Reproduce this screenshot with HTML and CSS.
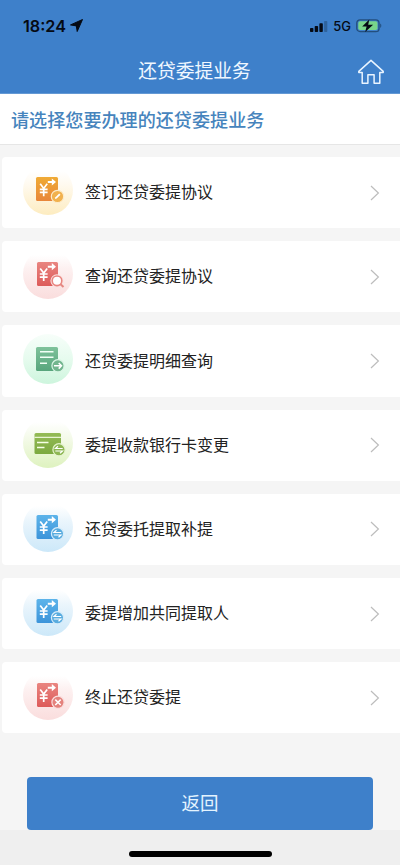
FILE: index.html
```html
<!DOCTYPE html>
<html lang="zh-CN">
<head>
<meta charset="utf-8">
<meta name="viewport" content="width=device-width, initial-scale=1">
<title>还贷委提业务</title>
<link rel="stylesheet" href="styles.css">
</head>
<body>
<svg class="defs" aria-hidden="true">
  <defs>
    <linearGradient id="g-orange" x1="0" y1="0" x2="0" y2="1"><stop offset="0" stop-color="#f0ab35"/><stop offset="1" stop-color="#e8863a"/></linearGradient>
    <linearGradient id="g-red" x1="0" y1="0" x2="0" y2="1"><stop offset="0" stop-color="#e98580"/><stop offset="1" stop-color="#dd5b5a"/></linearGradient>
    <linearGradient id="g-green" x1="0" y1="0" x2="0" y2="1"><stop offset="0" stop-color="#7fc29b"/><stop offset="1" stop-color="#57a57c"/></linearGradient>
    <linearGradient id="g-olive" x1="0" y1="0" x2="0" y2="1"><stop offset="0" stop-color="#94bb55"/><stop offset="1" stop-color="#7ca940"/></linearGradient>
    <linearGradient id="g-blue" x1="0" y1="0" x2="0" y2="1"><stop offset="0" stop-color="#5db4ea"/><stop offset="1" stop-color="#3c94da"/></linearGradient>
    <g id="yuan" fill="none" stroke="#fff">
      <path d="M17.2 18.8l3.5 4.6 3.5-4.6M20.7 23.4v7.8M16.8 24.3h7.8M16.8 27.4h7.8" stroke-width="1.7"/>
      <path d="M24.8 17h5.5" stroke-width="1.9"/>
      <path d="M28.8 13.4l4.2 3.6-4.2 3.6z" fill="#fff" stroke="none"/>
    </g>
    <g id="swap" fill="none" stroke="#fff" stroke-width="1.2">
      <path d="M38.2 30.5h-7.2l2.5-2.3M30.8 33h7.2l-2.5 2.3"/>
    </g>
  </defs>
</svg>
<div class="screen">
  <header class="top">
    <div class="status">
      <div class="clock">18:24
        <svg width="13" height="13" viewBox="0 0 13 13"><path d="M12.5.5L7.2 12.5 6.3 6.9.5 5.9z" fill="#050a14" stroke="#050a14" stroke-linejoin="round"/></svg>
      </div>
      <div class="signals">
        <svg width="18" height="12" viewBox="0 0 18 12"><g fill="#050a14"><rect x="0" y="8" width="3.4" height="4" rx=".8"/><rect x="4.7" y="6" width="3.4" height="6" rx=".8"/><rect x="9.4" y="3.3" width="3.4" height="8.7" rx=".8"/><rect x="14.1" y="1" width="3.2" height="11" rx=".8" opacity=".25"/></g></svg>
        <span class="net">5G</span>
        <svg width="26" height="14" viewBox="0 0 26 14"><rect x=".8" y=".8" width="22.2" height="11.8" rx="3.2" fill="none" stroke="#234e7d" stroke-width="1.3"/><rect x="2.3" y="2.3" width="19.2" height="8.8" rx="1.8" fill="#78d68a"/><path d="M24.2 4.5c1.5.6 1.5 3.8 0 4.4z" fill="#234e7d"/><path d="M13.3.6L6.2 7.5h4.4L9.2 13l7.9-7.2h-4.9z" fill="#050a14"/></svg>
      </div>
    </div>
    <div class="nav">
      <h1>还贷委提业务</h1>
      <svg class="home" width="28" height="26" viewBox="0 0 28 26"><path d="M14 1.4L1.8 12.4v1.2h3.4v10.6h5.7v-8.4h6.2v8.4h5.7V13.6h3.4v-1.2z" fill="none" stroke="#e9f4ff" stroke-width="1.5" stroke-linejoin="round"/></svg>
    </div>
  </header>
  <h2 class="prompt">请选择您要办理的还贷委提业务</h2>
  <main class="list">
    <a class="card">
      <svg class="icon orange" viewBox="0 0 50 50"><rect x="13" y="12" width="22" height="24" rx="1.5" fill="url(#g-orange)"/><use href="#yuan"/><circle class="badge" cx="34.5" cy="31.5" r="6.2" fill="#f1b14d"/><path d="M31.9 34.1l.5-1.8 3.8-3.8 1.3 1.3-3.8 3.8z" fill="#fff"/></svg>
      <span>签订还贷委提协议</span><svg class="chevron" viewBox="0 0 10 16"><path d="M1 1l7.4 7L1 15"/></svg>
    </a>
    <a class="card">
      <svg class="icon red" viewBox="0 0 50 50"><rect x="14" y="13" width="21" height="24" rx="1.5" fill="url(#g-red)"/><use href="#yuan" y=".7"/><circle cx="34" cy="31.8" r="4.8" fill="#fff" stroke="#fae2e1" stroke-width="3.6"/><circle cx="34" cy="31.8" r="4.8" fill="#fff" stroke="#e98580" stroke-width="1.6"/><path d="M37.5 35.3l3 2.8" stroke="#e58882" stroke-width="2"/></svg>
      <span>查询还贷委提协议</span><svg class="chevron" viewBox="0 0 10 16"><path d="M1 1l7.4 7L1 15"/></svg>
    </a>
    <a class="card">
      <svg class="icon green" viewBox="0 0 50 50"><rect x="13" y="13" width="22" height="24" rx="1.5" fill="url(#g-green)"/><path d="M17 17.7h13.5M17 23.2h13.5M17 29.2h7" stroke="#f2fff6" stroke-width="1.6"/><circle class="badge" cx="35" cy="31.8" r="6.1" fill="#72b58e"/><path d="M31 31.8h7M35.7 29l2.8 2.8-2.8 2.8" fill="none" stroke="#fff" stroke-width="1.5"/></svg>
      <span>还贷委提明细查询</span><svg class="chevron" viewBox="0 0 10 16"><path d="M1 1l7.4 7L1 15"/></svg>
    </a>
    <a class="card">
      <svg class="icon olive" viewBox="0 0 50 50"><rect x="11.5" y="15" width="26.5" height="21" rx="1.5" fill="url(#g-olive)"/><path d="M11.5 19.4H38" stroke="#e8f4d2" stroke-width="1.3"/><path d="M14 24.4h11.5M14 29.4h7.5" stroke="#f6ffe7" stroke-width="1.5"/><circle class="badge" cx="36" cy="31.8" r="6.1" fill="#8eb754"/><use href="#swap" x="1.5"/></svg>
      <span>委提收款银行卡变更</span><svg class="chevron" viewBox="0 0 10 16"><path d="M1 1l7.4 7L1 15"/></svg>
    </a>
    <a class="card">
      <svg class="icon blue" viewBox="0 0 50 50"><rect x="13.5" y="13" width="21.5" height="24" rx="1.5" fill="url(#g-blue)"/><use href="#yuan" y=".7"/><circle class="badge" cx="34.5" cy="31.8" r="6.1" fill="#59acdf"/><use href="#swap"/></svg>
      <span>还贷委托提取补提</span><svg class="chevron" viewBox="0 0 10 16"><path d="M1 1l7.4 7L1 15"/></svg>
    </a>
    <a class="card">
      <svg class="icon blue" viewBox="0 0 50 50"><rect x="13.5" y="13" width="21.5" height="24" rx="1.5" fill="url(#g-blue)"/><use href="#yuan" y=".7"/><circle class="badge" cx="34.5" cy="31.8" r="6.1" fill="#59acdf"/><use href="#swap"/></svg>
      <span>委提增加共同提取人</span><svg class="chevron" viewBox="0 0 10 16"><path d="M1 1l7.4 7L1 15"/></svg>
    </a>
    <a class="card">
      <svg class="icon red" viewBox="0 0 50 50"><rect x="14" y="13" width="21" height="24" rx="1.5" fill="url(#g-red)"/><use href="#yuan" y=".7"/><circle class="badge" cx="35" cy="32.3" r="6.1" fill="#e4827d"/><path d="M32.3 29.6l5.4 5.4M37.7 29.6l-5.4 5.4" stroke="#fff" stroke-width="1.5"/></svg>
      <span>终止还贷委提</span><svg class="chevron" viewBox="0 0 10 16"><path d="M1 1l7.4 7L1 15"/></svg>
    </a>
  </main>
  <button class="back">返回</button>
  <footer class="bottom"><div class="indicator"></div></footer>
</div>
</body>
</html>
```
FILE: styles.css
```css
* { box-sizing: border-box; }
body {
  margin: 0;
  background: #f5f5f5;
  font-family: "Liberation Sans", "Noto Sans CJK SC", sans-serif;
}
svg { display: block; flex: none; }
.defs { position: absolute; width: 0; height: 0; }
.screen {
  display: flex;
  flex-direction: column;
  height: 865px;
  overflow: hidden;
}
.top {
  height: 94px;
  flex: none;
  background: #3e80ca;
  border-bottom: 1px solid #6499d4;
}
.status {
  display: flex;
  justify-content: space-between;
  align-items: center;
  height: 51px;
  padding: 0 18px 0 23px;
  color: #050a14;
  font-family: Inter, sans-serif;
}
.clock {
  display: flex;
  align-items: center;
  gap: 4px;
  font-size: 16.2px;
  font-weight: 600;
}
.signals { display: flex; align-items: center; gap: 5px; }
.net { font-size: 13px; font-weight: 500; }
.nav {
  display: grid;
  grid-template-columns: 1fr auto 1fr;
  align-items: center;
  height: 41px;
  padding: 0 15px 0 4px;
}
h1 {
  grid-column: 2;
  margin: 0;
  padding-top: 1px;
  color: #f0f7ff;
  font-size: 18.8px;
  font-weight: 400;
  line-height: 28px;
}
.home { justify-self: end; }
.prompt {
  flex: none;
  height: 51px;
  margin: 0;
  padding-left: 11px;
  background: #fff;
  border-bottom: 1px solid #e6e6e6;
  color: #4684bd;
  font-size: 18.1px;
  font-weight: 500;
  line-height: 54px;
}
.list {
  display: flex;
  flex-direction: column;
  gap: 12.9px;
  padding: 12px 0 0 2px;
}
.card {
  display: flex;
  align-items: center;
  height: 71.3px;
  padding: 0 20px 0 21px;
  border-radius: 4px 0 0 4px;
  background: #fff;
  color: #222;
  font-size: 16px;
}
.card span { flex: 1; margin-left: 12px; padding-top: 1px; line-height: 24px; }
.icon {
  width: 50px;
  height: 50px;
  margin-bottom: 5px;
  border-radius: 50%;
}
.orange { background: linear-gradient(#fff 12%, #fffaf0 38%, #fdecc0); --tint: #fdebc8; }
.red { background: linear-gradient(#fff 12%, #fdf1f1 38%, #fadddd); --tint: #fadddd; }
.green { background: linear-gradient(#f7fefa, #e6fbee 50%, #cdf5dd); --tint: #d9f5e4; }
.olive { background: linear-gradient(#fff 8%, #f4fae9 40%, #def2bf); --tint: #e4f3cd; }
.blue { background: linear-gradient(#fff 8%, #eaf5fc 38%, #cce8f9); --tint: #d5ecfa; }
.badge { stroke: var(--tint); stroke-width: 1.2; }
.chevron {
  width: 10px;
  height: 16px;
  fill: none;
  stroke: #bdbdbd;
  stroke-width: 1.2;
}
.back {
  flex: none;
  height: 53px;
  margin: 43.5px 27px 0;
  padding: 0;
  border: 0;
  border-radius: 4px;
  background: #3e80ca;
  color: #e4f4ff;
  font: 400 18.5px/53px "Liberation Sans", "Noto Sans CJK SC", sans-serif;
}
.bottom {
  flex: 1;
  display: flex;
  justify-content: center;
  align-items: flex-start;
  padding-top: 21px;
  background: #efefef;
}
.indicator {
  width: 143px;
  height: 6px;
  border-radius: 3px;
  background: #000;
}
```
